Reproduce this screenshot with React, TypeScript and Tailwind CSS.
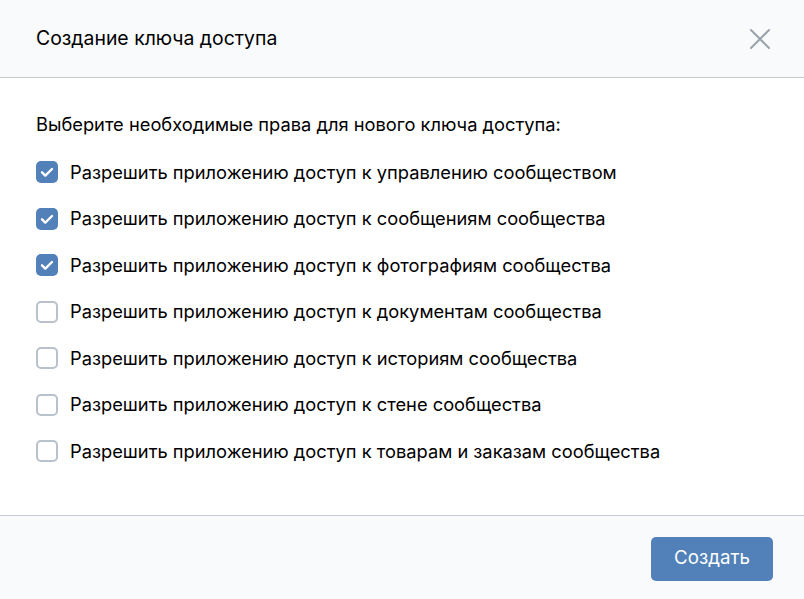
import { useState } from 'react';

const permissions = [
    { label: 'Разрешить приложению доступ к управлению сообществом', checked: true },
    { label: 'Разрешить приложению доступ к сообщениям сообщества', checked: true },
    { label: 'Разрешить приложению доступ к фотографиям сообщества', checked: true },
    { label: 'Разрешить приложению доступ к документам сообщества', checked: false },
    { label: 'Разрешить приложению доступ к историям сообщества', checked: false },
    { label: 'Разрешить приложению доступ к стене сообщества', checked: false },
    { label: 'Разрешить приложению доступ к товарам и заказам сообщества', checked: false },
];

function Checkbox({ checked }: { checked: boolean }) {
    if (checked) {
        return (
            <span className="flex items-center justify-center w-[22px] h-[22px] rounded-[5px] bg-[#5181b8] shrink-0">
                <svg width="22" height="22" viewBox="0 0 22 22" fill="none">
                    <path d="M6 11.3l3.3 3.3L16 8" stroke="white" strokeWidth="2.4" strokeLinecap="round" strokeLinejoin="round" />
                </svg>
            </span>
        );
    }
    return <span className="block w-[22px] h-[22px] rounded-[5px] border-2 border-[#b8c1cc] bg-white shrink-0" />;
}

export default function App() {
    const [items, setItems] = useState(permissions);

    const toggle = (i: number) => {
        setItems(items.map((it, idx) => (idx === i ? { ...it, checked: !it.checked } : it)));
    };

    return (
        <main className="w-[804px] h-[599px] flex flex-col bg-white text-black font-['Inter',sans-serif]">
            <header className="h-[78px] shrink-0 flex items-center justify-between pl-9 pr-[32px] bg-[#f9fafc] border-b border-[#c5c9d0]">
                <h1 className="text-[19.4px] text-[#000]">Создание ключа доступа</h1>
                <button className="w-[24px] h-[24px] flex items-center justify-center">
                    <svg width="22" height="22" viewBox="0 0 22 22" fill="none">
                        <path d="M2 2l18 18M20 2L2 20" stroke="#99a2ad" strokeWidth="2" strokeLinecap="round" />
                    </svg>
                </button>
            </header>

            <section className="flex-1 pl-9 pt-[35px]">
                <p className="text-[18.3px] leading-[22px] mb-[14px]">Выберите необходимые права для нового ключа доступа:</p>
                <ul>
                    {items.map((it, i) => (
                        <li key={it.label} className="h-[46.5px] flex items-center">
                            <label className="flex items-center gap-3 cursor-pointer" onClick={() => toggle(i)}>
                                <Checkbox checked={it.checked} />
                                <span className="text-[18.3px]">{it.label}</span>
                            </label>
                        </li>
                    ))}
                </ul>
            </section>

            <footer className="h-[84px] shrink-0 flex items-center justify-end pr-[31px] pt-[2px] bg-[#f9fafc] border-t border-[#c5c9d0]">
                <button className="w-[122px] h-[44px] rounded-[5px] bg-[#5181b8] text-white text-[18.7px]">Создать</button>
            </footer>
        </main>
    );
}
